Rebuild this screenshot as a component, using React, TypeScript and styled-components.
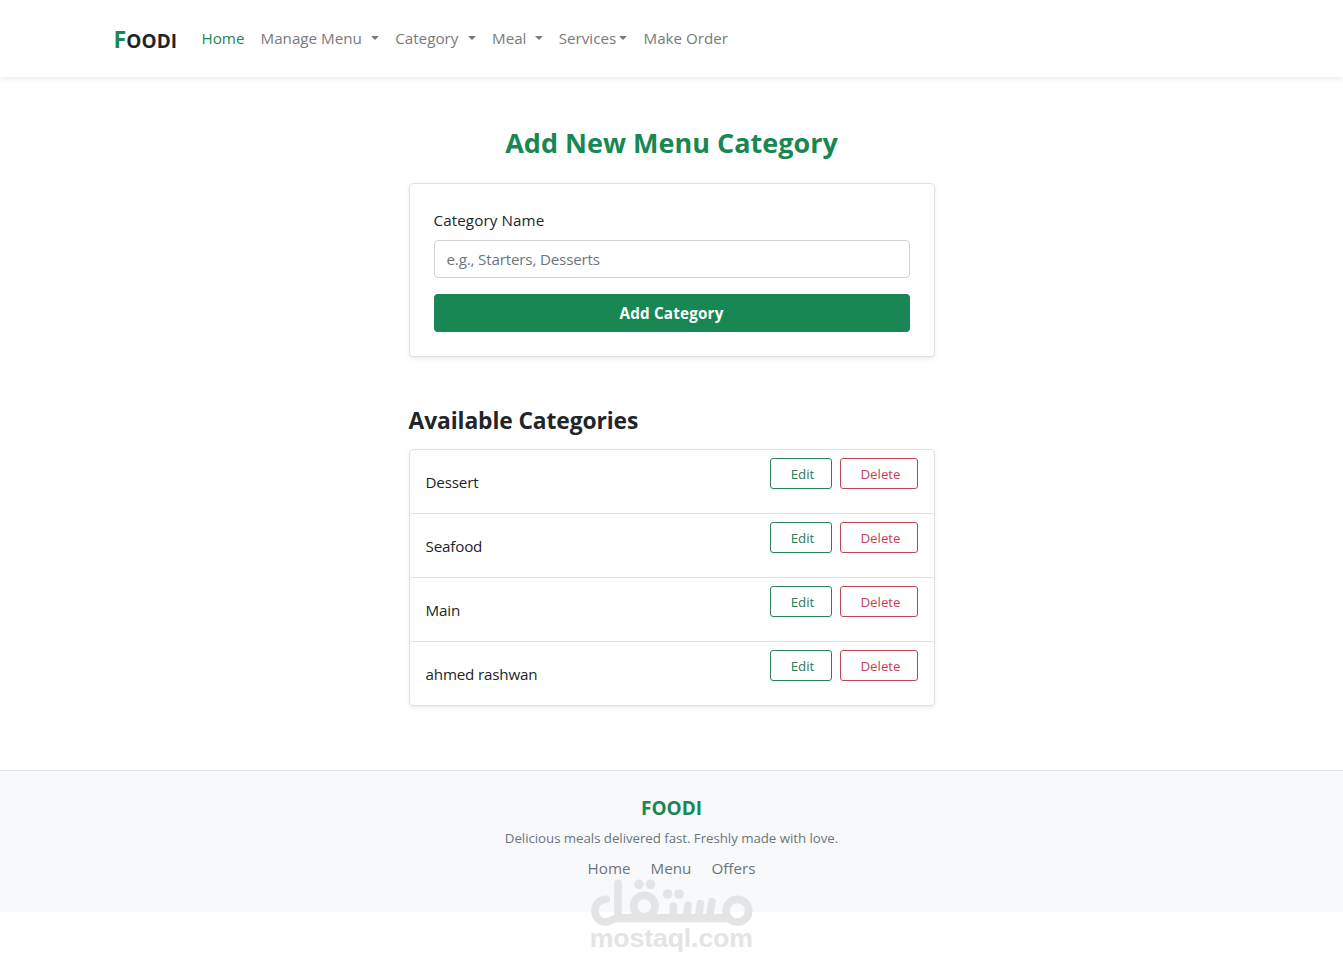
import React from "react";
import styled, { createGlobalStyle } from "styled-components";

const navItems = [
  { label: "Home", width: 43, active: true },
  { label: "Manage Menu", width: 102, caret: 8.7 },
  { label: "Category", width: 65, caret: 7.8 },
  { label: "Meal", width: 34, caret: 8.7 },
  { label: "Services", width: 57, caret: 3.8 },
  { label: "Make Order", width: 84 },
];

const categories = ["Dessert", "Seafood", "Main", "ahmed rashwan"];

const App = () => {
  return (
    <Page>
      <GlobalStyle />
      <Navbar>
        <Container>
          <Brand>
            <span>F</span>OODI
          </Brand>
          <NavList>
            {navItems.map((item) => (
              <NavLink key={item.label} $active={item.active}>
                <NavLabel $width={item.width}>{item.label}</NavLabel>
                {item.caret && <Caret $gap={item.caret} />}
              </NavLink>
            ))}
          </NavList>
        </Container>
      </Navbar>
      <Main>
        <Title>Add New Menu Category</Title>
        <Card>
          <Label htmlFor="category">Category Name</Label>
          <Input id="category" placeholder="e.g., Starters, Desserts" />
          <SubmitButton type="button">Add Category</SubmitButton>
        </Card>
        <Subtitle>Available Categories</Subtitle>
        <List>
          {categories.map((name) => (
            <Row key={name}>
              <Name>{name}</Name>
              <Actions>
                <OutlineButton $color="#2a8259" $width={62}>
                  Edit
                </OutlineButton>
                <OutlineButton $color="#c04453" $width={78}>
                  Delete
                </OutlineButton>
              </Actions>
            </Row>
          ))}
        </List>
      </Main>
      <Footer>
        <FooterBrand>FOODI</FooterBrand>
        <Tagline>Delicious meals delivered fast. Freshly made with love.</Tagline>
        <FooterLinks>
          <a>Home</a>
          <a>Menu</a>
          <a>Offers</a>
        </FooterLinks>
        <Watermark viewBox="60 54 489 240">
          <g fill="none" stroke="#e3e4e5" strokeWidth="23" strokeLinecap="round">
            <path d="M109 118C86 118 75 134 75 152C75 172 89 186 107 186C122 186 130 174 142 174" />
            <path d="M144 70V172" />
            <path d="M142 174H474" strokeWidth="26" />
            <circle cx="223" cy="138" r="32" />
            <circle cx="502" cy="152" r="34" />
            <path d="M310 138V172M354 136L350 172M391 131L386 172M426 125L418 172" />
          </g>
          <g fill="#e3e4e5">
            <circle cx="207" cy="73" r="14.5" />
            <circle cx="241" cy="73" r="14.5" />
            <circle cx="293" cy="102" r="14.5" />
            <circle cx="327" cy="102" r="14.5" />
            <text x="59" y="262" textLength="490">
              mostaql.com
            </text>
          </g>
        </Watermark>
      </Footer>
    </Page>
  );
};

export default App;

const GlobalStyle = createGlobalStyle`
  *, *::before, *::after {
    box-sizing: border-box;
  }

  body {
    margin: 0;
    background-color: #ffffff;
    color: #212529;
    font-family: "Open Sans", "Noto Sans", sans-serif;
    font-size: 15.2px;
    line-height: 24px;
  }
`;

const Page = styled.div`
  min-height: 972px;
`;

const Navbar = styled.nav`
  height: 77px;
  background-color: #ffffff;
  box-shadow: 0 2px 4px rgba(0, 0, 0, 0.075);
`;

const Container = styled.div`
  display: flex;
  align-items: center;
  width: 1140px;
  height: 77px;
  margin: 0 auto;
  padding: 0 12px 2px;
`;

const Brand = styled.div`
  width: 64px;
  margin-right: 24px;
  padding-top: 4px;
  font-size: 19px;
  font-weight: 700;
  letter-spacing: 0.1px;
  white-space: nowrap;

  span {
    color: #198754;
    font-size: 23px;
  }
`;

const NavList = styled.div`
  display: flex;
  gap: 16px;
`;

const NavLink = styled.a<{ $active?: boolean }>`
  display: flex;
  align-items: center;
  color: ${({ $active }) => ($active ? "#198754" : "#7a7a7a")};
`;

const NavLabel = styled.span<{ $width: number }>`
  width: ${({ $width }) => $width}px;
  white-space: nowrap;
`;

const Caret = styled.span<{ $gap: number }>`
  margin-left: ${({ $gap }) => $gap}px;
  border-top: 4px solid;
  border-right: 4px solid transparent;
  border-left: 4px solid transparent;
`;

const Main = styled.main`
  width: 526px;
  margin: 0 auto;
  padding-top: 49px;
`;

const Title = styled.h2`
  margin: 0 0 23px;
  color: #198754;
  font-size: 27px;
  font-weight: 700;
  line-height: 34px;
  text-align: center;
`;

const Card = styled.div`
  height: 174px;
  padding: 24px;
  border: 1px solid #dee2e6;
  border-radius: 4px;
  box-shadow: 0 2px 4px rgba(0, 0, 0, 0.075);
`;

const Label = styled.label`
  display: block;
  margin-bottom: 8px;
  letter-spacing: 0.1px;
`;

const Input = styled.input`
  display: block;
  width: 100%;
  height: 38px;
  margin-bottom: 16px;
  padding: 6px 12px;
  border: 1px solid #ced4da;
  border-radius: 4px;
  font: inherit;
  letter-spacing: -0.18px;

  &::placeholder {
    color: #6c757d;
    opacity: 1;
  }
`;

const SubmitButton = styled.button`
  display: block;
  width: 100%;
  height: 38px;
  padding: 0;
  border: 0;
  border-radius: 4px;
  background-color: #198754;
  color: #ffffff;
  font: inherit;
  font-weight: 700;
  letter-spacing: 0.2px;
`;

const Subtitle = styled.h4`
  margin: 48px 0 13px;
  font-size: 22.8px;
  font-weight: 700;
  letter-spacing: -0.1px;
  line-height: 31px;
`;

const List = styled.div`
  border: 1px solid #dee2e6;
  border-radius: 4px;
  box-shadow: 0 2px 4px rgba(0, 0, 0, 0.075);
`;

const Row = styled.div`
  display: flex;
  align-items: center;
  justify-content: space-between;
  height: 63px;
  padding: 8px 16px;

  & + & {
    height: 64px;
    border-top: 1px solid #dee2e6;
  }
`;

const Name = styled.span`
  letter-spacing: -0.18px;
`;

const Actions = styled.div`
  display: flex;
  gap: 8px;
  margin-bottom: 16px;
`;

const OutlineButton = styled.button<{ $color: string; $width: number }>`
  width: ${({ $width }) => $width}px;
  height: 31px;
  padding: 0 0 0 4px;
  border: 1px solid ${({ $color }) => $color};
  border-radius: 3px;
  background-color: transparent;
  color: ${({ $color }) => $color};
  font: inherit;
  font-size: 13.3px;
`;

const Footer = styled.footer`
  position: relative;
  height: 142px;
  margin-top: 64px;
  padding-top: 25px;
  border-top: 1px solid #dee2e6;
  background-color: #f8f9fa;
  text-align: center;
`;

const FooterBrand = styled.div`
  margin-bottom: 8px;
  color: #198754;
  font-size: 19px;
  font-weight: 700;
`;

const Tagline = styled.div`
  color: #6c757d;
  font-size: 13.3px;
  letter-spacing: -0.05px;
  line-height: 21px;
`;

const FooterLinks = styled.div`
  display: flex;
  justify-content: center;
  gap: 20px;
  margin-top: 7px;
  color: #6c757d;
`;

const Watermark = styled.svg`
  position: absolute;
  top: 107px;
  left: 590px;
  width: 163px;
  height: 80px;

  text {
    font-family: "Liberation Sans", Arial, sans-serif;
    font-size: 80px;
    font-weight: 700;
  }
`;
